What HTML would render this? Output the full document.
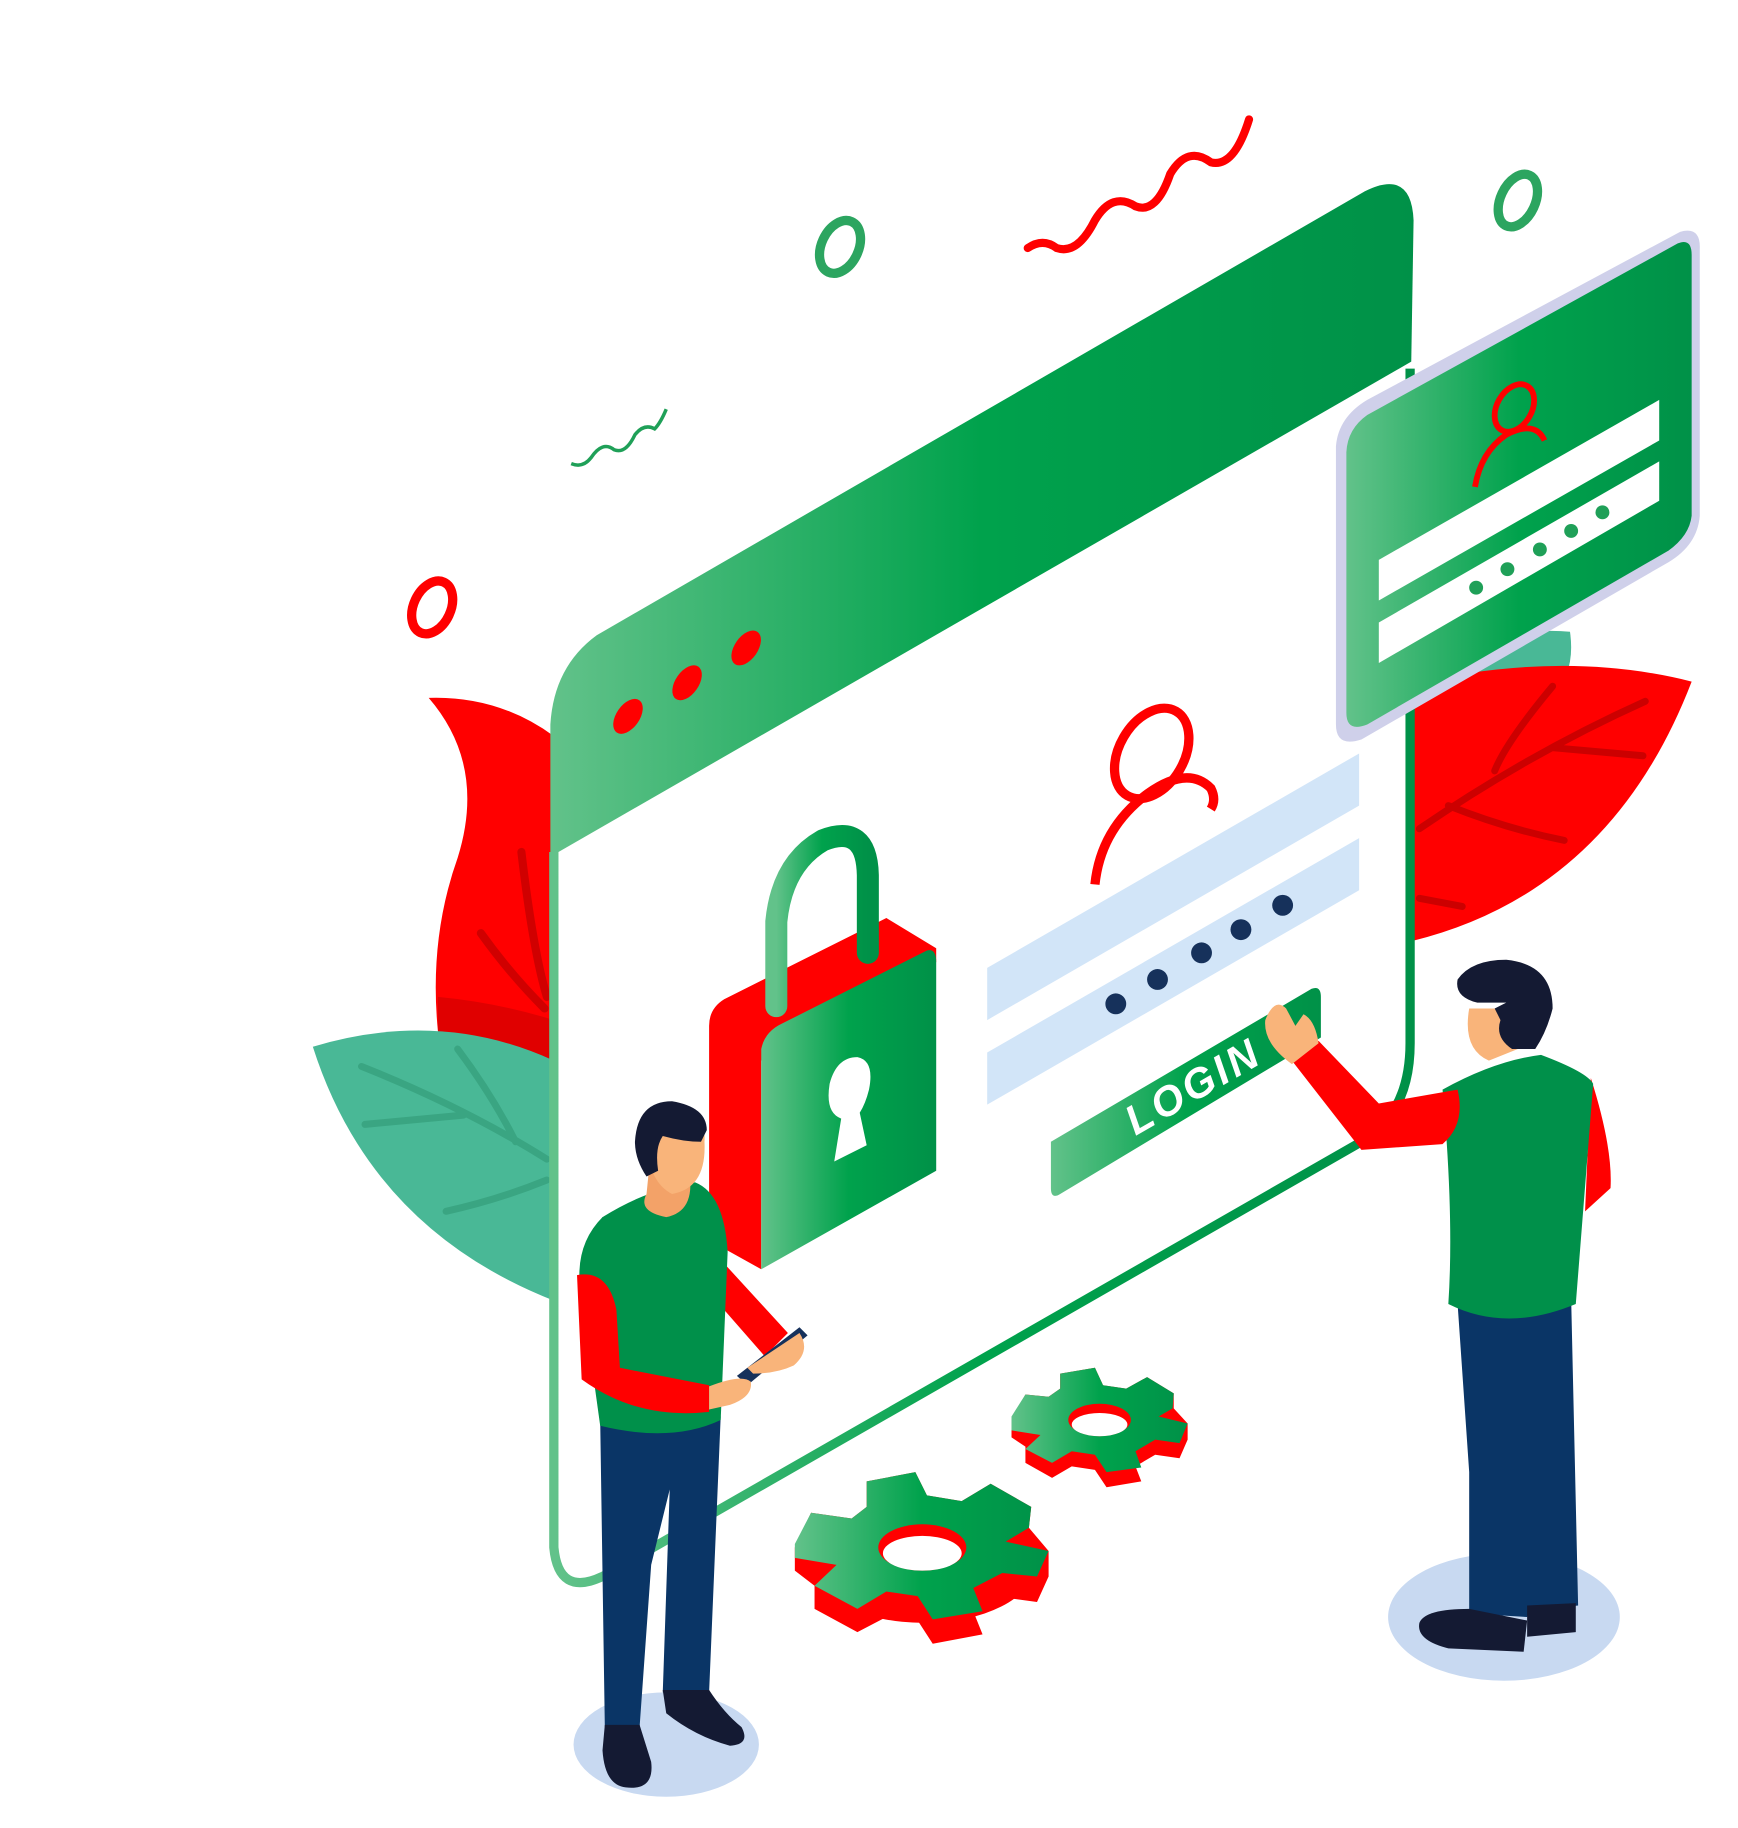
<!DOCTYPE html>
<html><head><meta charset="utf-8"><style>
html,body{margin:0;padding:0;background:#fff;}
svg{display:block;}
</style></head><body>
<svg width="1738" height="1828" viewBox="0 0 1500 1577" preserveAspectRatio="none" xmlns="http://www.w3.org/2000/svg">
<defs>
<linearGradient id="g" x1="0" x2="1" y1="0" y2="0">
<stop offset="0" stop-color="#62c28a"/><stop offset="0.5" stop-color="#00a24c"/><stop offset="1" stop-color="#009148"/>
</linearGradient>
</defs>
<!-- squiggles and rings -->
<path d="M887,214 Q900,205 912,214 Q930,220 945,190 Q960,165 980,178 Q998,185 1010,150 Q1025,125 1045,140 Q1065,145 1078,103" fill="none" stroke="#f00" stroke-width="7" stroke-linecap="round"/>
<path d="M493,400 Q503,404 510,395 Q520,380 530,388 Q540,392 548,375 Q556,365 565,370 Q570,365 575,353" fill="none" stroke="#1fa058" stroke-width="3"/>
<ellipse cx="725" cy="213" rx="16" ry="24" transform="rotate(25 725 213)" fill="none" stroke="#2ca560" stroke-width="8"/>
<ellipse cx="1310" cy="173" rx="15" ry="24" transform="rotate(25 1310 173)" fill="none" stroke="#2ca560" stroke-width="8"/>
<ellipse cx="373" cy="524" rx="16" ry="24" transform="rotate(25 373 524)" fill="none" stroke="#f00" stroke-width="8"/>
<!-- leaves -->
<path d="M370,602 Q430,600 478,635 L478,918 Q410,905 378,890 Q370,810 395,740 Q420,660 370,602Z" fill="#f00"/>
<path d="M378,860 Q430,865 478,880 L478,918 Q410,905 378,890Z" fill="#e00000"/>
<path d="M450,735 Q460,820 472,860 M415,805 Q440,840 470,870" stroke="#d00000" stroke-width="7" fill="none" stroke-linecap="round"/>
<path d="M270,903 Q380,870 478,915 L478,1122 Q320,1060 270,903Z" fill="#49b896"/>
<path d="M312,920 Q400,955 472,1000 M315,970 L400,962 M395,905 Q425,945 445,985 M385,1045 Q430,1035 472,1018" stroke="#3aa582" stroke-width="6" fill="none" stroke-linecap="round"/>
<path d="M1220,570 Q1300,540 1355,545 Q1360,580 1340,600 L1220,640Z" fill="#49b896"/>
<path d="M1460,588 Q1350,560 1218,590 L1218,812 Q1390,770 1460,588Z" fill="#f00"/>
<path d="M1420,605 Q1320,650 1225,715 M1340,592 Q1300,640 1290,665 M1340,645 L1418,652 M1250,695 Q1300,715 1350,725 M1225,775 L1262,782" stroke="#cc0000" stroke-width="6" fill="none" stroke-linecap="round"/>
<!-- main window -->
<path d="M482,735 L1212,315 L1215,900 Q1215,960 1175,985 L520,1360 Q480,1380 480,1330Z" fill="#fff"/>
<path d="M478,735 L478,1335 Q482,1378 520,1360 L1175,985 Q1217,960 1217,900 L1217,318" fill="none" stroke="url(#g)" stroke-width="8"/>
<path d="M475,625 Q478,575 515,548 L1178,165 Q1218,145 1220,190 L1218,312 L482,735 L475,735Z" fill="url(#g)"/>
<ellipse cx="542" cy="618" rx="10" ry="17" transform="rotate(35 542 618)" fill="#f00"/>
<ellipse cx="593" cy="589" rx="10" ry="17" transform="rotate(35 593 589)" fill="#f00"/>
<ellipse cx="644" cy="559" rx="10" ry="17" transform="rotate(35 644 559)" fill="#f00"/>
<!-- lock -->
<path d="M612,885 Q612,870 625,862 L765,792 L808,818 L808,830 L657,915 L657,1095 L612,1070Z" fill="#f00"/>
<path d="M657,905 Q660,890 675,883 L800,820 Q808,818 808,830 L808,1010 L657,1095Z" fill="url(#g)"/>
<path d="M670,868 L670,795 Q675,745 710,725 Q748,710 749,755 L749,822" fill="none" stroke="url(#g)" stroke-width="19" stroke-linecap="round"/>
<path d="M720,1002 L726,965 Q712,960 716,935 Q722,912 740,912 Q755,915 750,940 Q747,952 742,960 L748,988Z" fill="#fff"/>
<!-- user icon -->
<ellipse cx="994" cy="650" rx="28" ry="42" transform="rotate(30 994 650)" fill="none" stroke="#f00" stroke-width="8"/>
<path d="M945,763 Q950,715 990,685 Q1025,660 1045,680 Q1050,690 1045,698" fill="none" stroke="#f00" stroke-width="8"/>
<!-- inputs -->
<path d="M852,835 L1173,650 L1173,695 L852,880Z" fill="#d2e5f8"/>
<path d="M852,908 L1173,723 L1173,768 L852,953Z" fill="#d2e5f8"/>
<g fill="#16315b"><circle cx="963" cy="866" r="9"/><circle cx="999" cy="845" r="9"/><circle cx="1037" cy="822" r="9"/><circle cx="1071" cy="802" r="9"/><circle cx="1107" cy="781" r="9"/></g>
<!-- login -->
<path d="M907,985 L1132,853 Q1140,850 1140,860 L1140,895 L915,1030 Q907,1035 907,1025Z" fill="url(#g)"/>
<text x="0" y="0" transform="translate(980,980) rotate(-30)" font-family="Liberation Sans, sans-serif" font-weight="bold" font-style="italic" font-size="36" fill="#fff" letter-spacing="3">LOGIN</text>
<!-- side card -->
<path d="M1153,385 Q1155,360 1180,345 L1450,200 Q1468,195 1467,215 L1467,445 Q1465,470 1440,485 L1175,638 Q1153,645 1153,625Z" fill="#cfd0ea"/>
<path d="M1162,390 Q1163,370 1180,358 L1448,210 Q1460,205 1460,220 L1460,445 Q1458,462 1440,475 L1180,625 Q1162,632 1162,615Z" fill="url(#g)"/>
<path d="M1190,483 L1432,345 L1432,380 L1190,518Z" fill="#fff"/>
<path d="M1190,537 L1432,398 L1432,432 L1190,572Z" fill="#fff"/>
<g fill="#1fa058"><circle cx="1274" cy="507" r="6"/><circle cx="1301" cy="491" r="6"/><circle cx="1329" cy="474" r="6"/><circle cx="1356" cy="458" r="6"/><circle cx="1383" cy="442" r="6"/></g>
<ellipse cx="1307" cy="352" rx="15" ry="22" transform="rotate(30 1307 352)" fill="none" stroke="#f00" stroke-width="5"/>
<path d="M1273,420 Q1278,390 1300,375 Q1325,362 1333,380" fill="none" stroke="#f00" stroke-width="5"/>
<!-- gears -->
<g>
<ellipse cx="797" cy="1352" rx="95" ry="48" fill="#f00"/>
<path d="M686,1335 L700,1305 L735,1310 L748,1300 L748,1278 L790,1270 L800,1290 L830,1295 L855,1280 L890,1300 L888,1318 L905,1338 L905,1360 L895,1382 L865,1378 L840,1390 L848,1410 L805,1418 L792,1398 L765,1395 L740,1408 L703,1388 L703,1368 L686,1355Z" fill="#f00"/>
<path d="M686,1332 L700,1305 L735,1310 L748,1300 L748,1278 L790,1270 L800,1290 L830,1295 L855,1280 L890,1300 L888,1318 L868,1330 L905,1338 L895,1360 L865,1357 L840,1370 L848,1390 L805,1397 L792,1377 L765,1373 L740,1388 L703,1368 L722,1350 L686,1344Z" fill="url(#g)"/>
<ellipse cx="796" cy="1335" rx="38" ry="20" fill="#f00"/>
<ellipse cx="796" cy="1340" rx="34" ry="15" fill="#fff"/>
</g>
<g>
<path d="M873,1225 L885,1203 L905,1205 L915,1198 L915,1185 L945,1180 L952,1195 L972,1198 L990,1188 L1013,1202 L1013,1215 L1025,1228 L1025,1242 L1018,1258 L997,1255 L980,1265 L985,1278 L955,1283 L945,1268 L925,1265 L908,1275 L885,1262 L885,1248 L873,1240Z" fill="#f00"/>
<path d="M873,1222 L885,1203 L905,1205 L915,1198 L915,1185 L945,1180 L952,1195 L972,1198 L990,1188 L1013,1202 L1012,1215 L1000,1222 L1025,1228 L1018,1245 L997,1242 L980,1252 L985,1266 L955,1270 L945,1255 L925,1252 L908,1262 L885,1250 L898,1238 L873,1234Z" fill="url(#g)"/>
<ellipse cx="949" cy="1225" rx="27" ry="14" fill="#f00"/>
<ellipse cx="949" cy="1229" rx="24" ry="10" fill="#fff"/>
</g>
<!-- left person -->
<ellipse cx="575" cy="1505" rx="80" ry="45" fill="#c8d9f1"/>
<path d="M518,1225 L622,1222 L612,1460 L572,1460 L578,1285 L562,1350 L552,1490 L522,1490Z" fill="#0a3566"/>
<path d="M522,1488 L552,1488 L562,1520 Q565,1545 540,1542 Q522,1540 520,1510Z" fill="#141a33"/>
<path d="M572,1458 L612,1458 Q625,1478 640,1490 Q648,1505 630,1506 Q600,1498 575,1478Z" fill="#141a33"/>
<path d="M625,1090 L680,1150 L660,1170 L625,1130Z" fill="#f00"/>
<path d="M636,1187 L690,1145 L697,1152 L645,1195Z" fill="#16315b"/>
<path d="M645,1180 L690,1150 Q700,1165 685,1178 Q670,1185 650,1185Z" fill="#f9b47a"/>
<path d="M520,1050 Q560,1025 600,1020 Q625,1030 628,1080 L622,1225 Q580,1245 518,1230 L500,1100 Q500,1070 520,1050Z" fill="#00904a"/>
<path d="M498,1100 Q525,1095 532,1130 L535,1180 L612,1195 L612,1218 Q550,1225 502,1190Z" fill="#f00"/>
<path d="M612,1196 Q640,1185 648,1192 Q650,1205 630,1212 L612,1216Z" fill="#f9b47a"/>
<path d="M560,1010 L595,1012 Q600,1045 575,1050 Q550,1045 558,1030Z" fill="#f3a268"/>
<path d="M558,985 Q560,960 585,957 Q610,962 608,985 Q610,1025 580,1030 Q560,1020 558,985Z" fill="#f9b47a"/>
<path d="M548,985 Q550,950 580,950 Q610,955 610,975 L605,985 Q590,985 572,980 Q565,990 568,1010 L558,1015 Q548,1000 548,985Z" fill="#141a33"/>
<!-- right person -->
<ellipse cx="1298" cy="1395" rx="100" ry="55" fill="#c8d9f1"/>
<path d="M1258,1125 L1356,1120 L1362,1385 L1320,1390 L1318,1395 L1268,1392 L1268,1270Z" fill="#0a3566"/>
<path d="M1225,1400 Q1230,1388 1268,1388 L1318,1398 L1315,1425 L1250,1422 Q1222,1415 1225,1400Z" fill="#141a33"/>
<path d="M1318,1385 L1360,1383 L1360,1408 L1318,1412Z" fill="#141a33"/>
<path d="M1373,930 Q1392,990 1390,1025 L1368,1045Z" fill="#f00"/>
<path d="M1245,940 Q1290,915 1330,910 Q1370,925 1375,935 L1360,1125 Q1300,1150 1250,1125 Q1255,1050 1245,940Z" fill="#00904a"/>
<path d="M1258,940 L1190,952 L1138,898 L1115,915 L1175,992 L1245,987 Q1265,970 1258,940Z" fill="#f00"/>
<path d="M1115,918 Q1090,900 1092,880 Q1100,860 1110,870 L1118,885 L1125,875 Q1135,880 1138,900Z" fill="#f9b47a"/>
<path d="M1268,870 Q1262,905 1285,915 L1310,905 L1315,870Z" fill="#f9b47a"/>
<path d="M1258,845 Q1270,828 1300,828 Q1340,832 1340,870 Q1335,890 1325,905 L1305,905 Q1290,895 1295,880 L1290,870 L1300,865 L1275,865 Q1255,860 1258,845Z" fill="#141a33"/>
</svg>
</body></html>
